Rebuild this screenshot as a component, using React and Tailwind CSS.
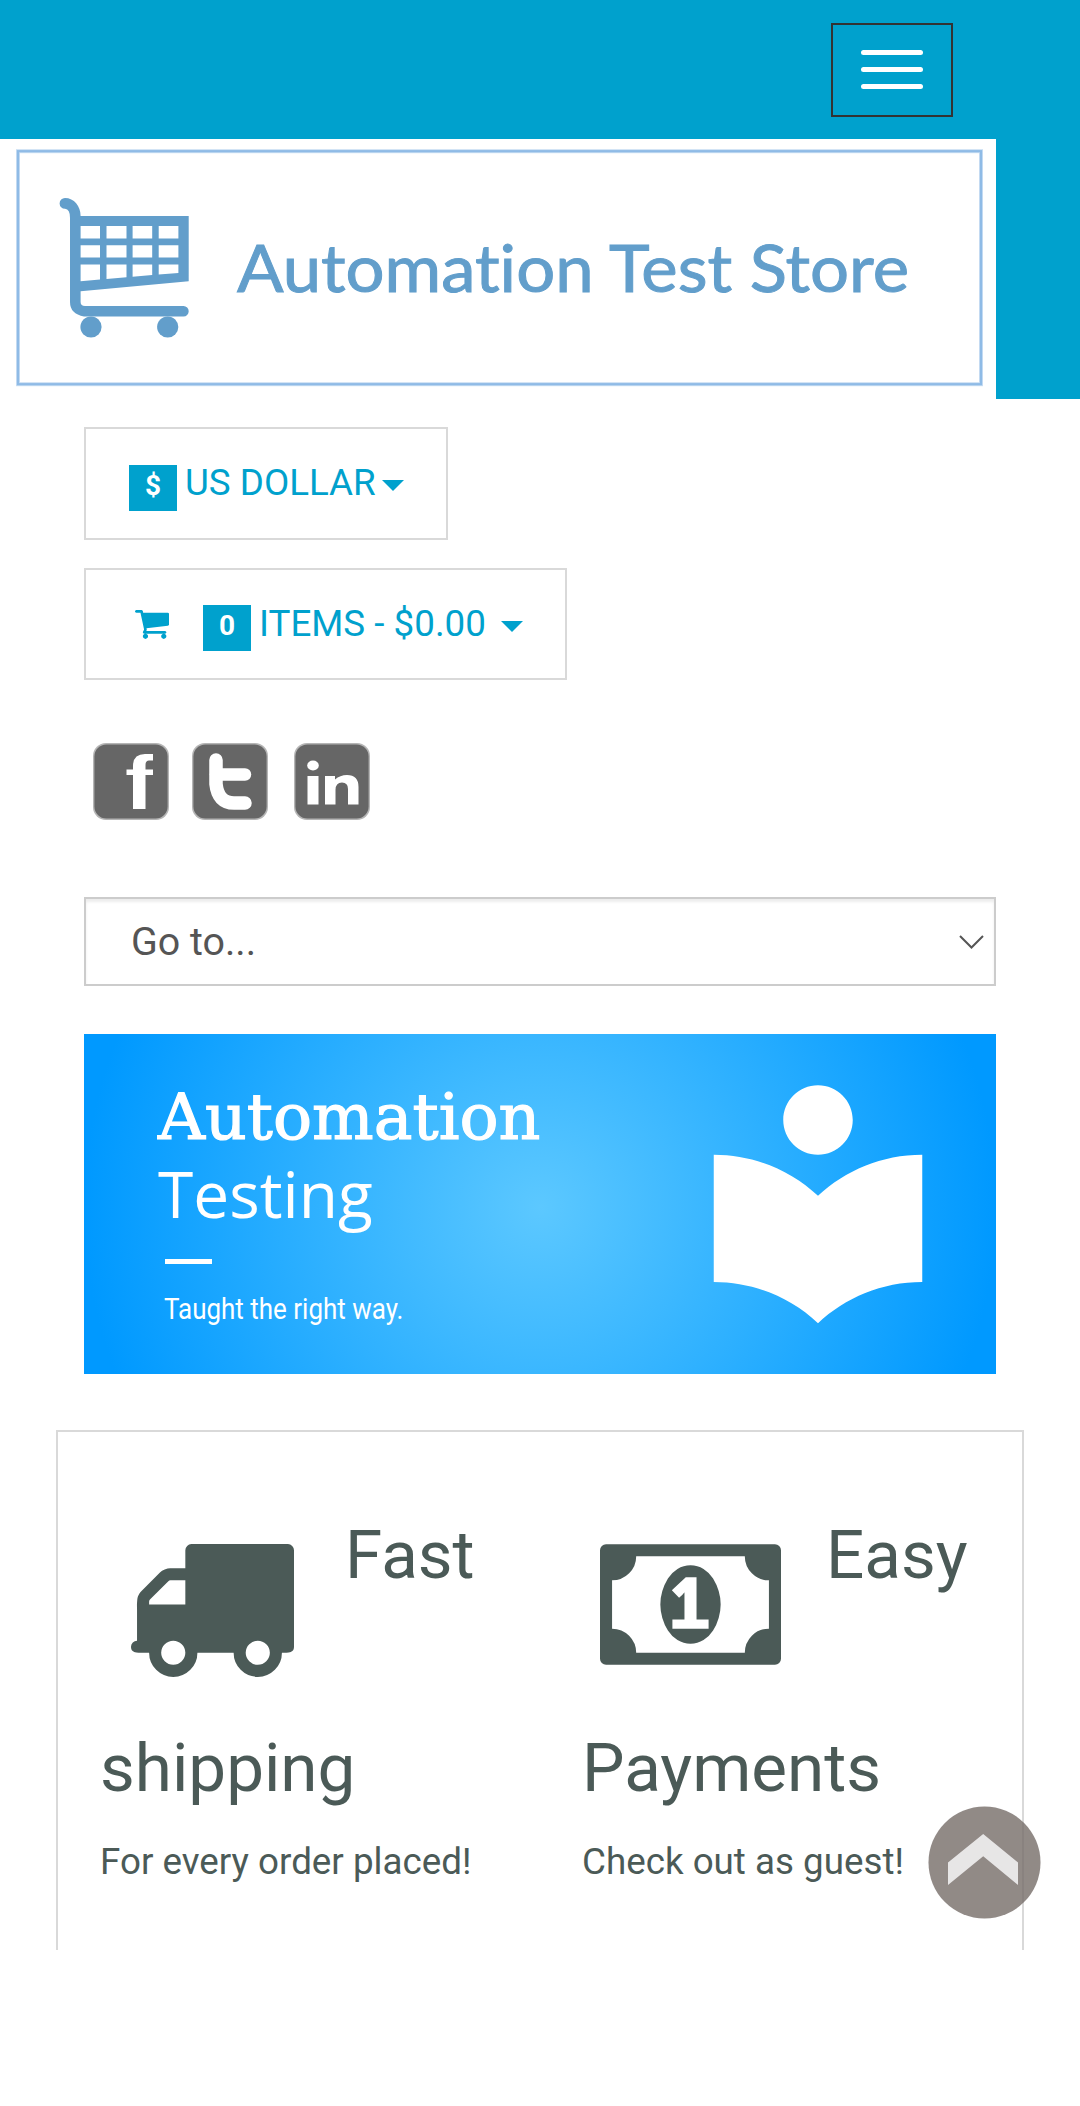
import React from "react";
import { MdLocalLibrary } from "react-icons/md";

const CartGlyph = () => (
  <svg className="h-[29px] w-[34px] fill-current" viewBox="64 256 1664 1408">
    <path d="M704 1536q0 52-38 90t-90 38-90-38-38-90 38-90 90-38 90 38 38 90zm896 0q0 52-38 90t-90 38-90-38-38-90 38-90 90-38 90 38 38 90zm128-1088v512q0 24-16.500 42.500t-40.500 21.500l-1044 122q13 60 13 70 0 16-24 64h920q26 0 45 19t19 45-19 45-45 19h-1024q-26 0-45-19t-19-45q0-11 8-31.500t16-36 21.500-40 15.500-29.500l-177-823h-204q-26 0-45-19t-19-45 19-45 45-19h256q16 0 28.500 6.500t19.500 15.500 13 24.500 8 26 5.500 29.500 4.500 26h1201q26 0 45 19t19 45z" />
  </svg>
);

const Truck = () => (
  <svg className="h-[133px] w-[163px] shrink-0 fill-current" viewBox="64 256 1728 1408">
    <path d="M640 1408q0-52-38-90t-90-38-90 38-38 90 38 90 90 38 90-38 38-90zm-384-512h384v-256h-158q-13 0-22 9l-195 195q-9 9-9 22v30zm1280 512q0-52-38-90t-90-38-90 38-38 90 38 90 90 38 90-38 38-90zm256-1088v1024q0 15-4 26.500t-13.500 18.500-16.500 11.500-23.500 6-22.500 2-25.500 0-22.500-.5q0 106-75 181t-181 75-181-75-75-181h-384q0 106-75 181t-181 75-181-75-75-181h-64q-3 0-22.500.5t-25.500 0-22.500-2-23.500-6-16.500-11.500-13.500-18.500-4-26.500q0-26 19-45t45-19v-320q0-8-.5-35t0-38 2.500-34.500 6.500-37 14-30.500 22.500-30l198-198q19-19 50.500-32t58.500-13h160v-192q0-26 19-45t45-19h1024q26 0 45 19t19 45z" />
  </svg>
);

const Money = () => (
  <svg className="h-[121px] w-[181px] shrink-0 fill-current" viewBox="0 256 1920 1280">
    <path d="M768 1152h384v-96h-128v-448h-114l-148 137 77 80q42-37 55-57h2v288h-128v96zm512-256q0 70-21 142t-59.500 134-101.500 101-138 39-138-39-101.500-101-59.500-134-21-142 21-142 59.500-134 101.500-101 138-39 138 39 101.500 101 59.500 134 21 142zm512 256v-512q-106 0-181-75t-75-181h-1152q0 106-75 181t-181 75v512q106 0 181 75t75 181h1152q0-106 75-181t181-75zm128-832v1152q0 26-19 45t-45 19h-1792q-26 0-45-19t-19-45v-1152q0-26 19-45t45-19h1792q26 0 45 19t19 45z" />
  </svg>
);

const Logo = () => (
  <svg className="block h-[260px] w-[996px] bg-white" viewBox="0 139 996 260">
    <rect x="18" y="151.200" width="963" height="233" fill="none" stroke="#c9def3" strokeWidth="4" />
    <rect x="18" y="151.200" width="963" height="233" fill="none" stroke="#8fbbe6" strokeWidth="2.200" />
    <g fill="#629ecb">
      <path
        fillRule="evenodd"
        d="M65 198 C74 198 80.600 206 80.600 216 H188.700 V281.300 L80.600 291.300 V302 Q80.600 306 85 306 H183.500 A5.200 5.200 0 0 1 183.500 316.400 H84 Q70 314 70 302 V218 Q70 209 65 208.800 A5.400 5.400 0 0 1 65 198 Z
           M80.600 226 V238.500 H100 V226 Z M106.500 226 V238.500 H126.500 V226 Z M132.600 226 V238.500 H152.200 V226 Z M158.700 226 V238.500 H178.400 V226 Z
           M80.600 245.200 V257.500 H100 V245.200 Z M106.500 245.200 V257.500 H126.500 V245.200 Z M132.600 245.200 V257.500 H152.200 V245.200 Z M158.700 245.200 V257.500 H178.400 V245.200 Z
           M80.600 264.400 V281.300 L100 279.600 V264.400 Z M106.500 264.400 V279 L126.500 277.300 V264.400 Z M132.600 264.400 V276.800 L152.200 275.100 V264.400 Z M158.700 264.400 V274.600 L178.400 272.900 V264.400 Z"
      />
      <circle cx="91" cy="327" r="10.600" />
      <circle cx="167.700" cy="327" r="10.600" />
    </g>
    <text
      className="[font-variant-ligatures:none]"
      x="237"
      y="292"
      fontFamily="Lato, sans-serif"
      fontSize="66"
      fill="#629ecb"
      stroke="#629ecb"
      strokeWidth="1"
      textLength="672"
      lengthAdjust="spacingAndGlyphs"
    >
      Automation Test Store
    </text>
  </svg>
);

const Caret = ({ className }) => (
  <span className={`h-0 w-0 border-x-[11px] border-t-[11px] border-x-transparent border-t-[#00a1cd] ${className}`} />
);

const Badge = ({ children, className }) => (
  <span className={`h-[46px] w-[48px] bg-[#00a1cd] text-center text-[28px] leading-[41px] font-bold text-white ${className}`}>{children}</span>
);

const Tile = ({ className, children }) => (
  <svg className={`h-[77px] w-[76px] ${className}`} viewBox="0 0 76 77">
    <rect x="0" y="0" width="76" height="77" rx="13" fill="#b5b5b5" />
    <rect x="1.400" y="1.400" width="73.200" height="74" rx="12" fill="#666" />
    {children}
  </svg>
);

const Feature = ({ icon, first, second, text, iconPad, gap, className }) => (
  <div className={`text-[#4b5a57] ${className}`}>
    <div className={`flex h-[213px] items-start text-[67.4px] leading-[80px] ${iconPad} ${gap}`}>
      <span className="pt-[29px]">{icon}</span>
      <span>{first}</span>
    </div>
    <h2 className="text-[67.4px] leading-[80px]">{second}</h2>
    <p className="mt-[30px] text-[36.75px] leading-[48px] whitespace-nowrap">{text}</p>
  </div>
);

export default function App() {
  return (
    <div className="relative h-[2106px] w-[1080px] overflow-hidden bg-white font-['Roboto',sans-serif]">
      <header className="bg-[#00a1cd]">
        <div className="flex h-[139px] justify-end pt-[23px] pr-[127px]">
          <button className="flex h-[94px] w-[122px] flex-col items-center gap-[12px] border-2 border-[#333] pt-[25px]">
            <span className="h-[5px] w-[62px] rounded-[3px] bg-white" />
            <span className="h-[5px] w-[62px] rounded-[3px] bg-white" />
            <span className="h-[5px] w-[62px] rounded-[3px] bg-white" />
          </button>
        </div>
        <Logo />
      </header>

      <div className="px-[84px] pt-[28px]">
        <div className="flex h-[113px] w-[364px] items-start border-2 border-[#d9d9d9] pl-[43px] text-[#00a1cd]">
          <Badge className="mt-[36px]">$</Badge>
          <span className="ml-[8px] pt-[29px] text-[36.75px] leading-[50px] whitespace-nowrap">US DOLLAR</span>
          <Caret className="mt-[51px] ml-[6px]" />
        </div>
        <div className="mt-[28px] flex h-[112px] w-[483px] items-start border-2 border-[#d9d9d9] pl-[49px] text-[#00a1cd]">
          <span className="pt-[40px]"><CartGlyph /></span>
          <Badge className="mt-[35px] ml-[34px]">0</Badge>
          <span className="ml-[8px] pt-[29px] text-[36.75px] leading-[50px] whitespace-nowrap">ITEMS - $0.00</span>
          <Caret className="mt-[51px] ml-[15px]" />
        </div>

        <div className="mt-[63px] flex pl-[8.500px]">
          <Tile>
            <path d="M40 66 V32 H33.500 V26.500 H40 V23 Q40 11 52 11 H60 V17.500 H56 Q52.500 17.500 52.500 22 V26.500 H60 V32 H52.500 V66 Z" fill="#fff" />
          </Tile>
          <Tile className="ml-[23px]">
            <path d="M24 17 V41 Q26 60 42 60 H53" fill="none" stroke="#fff" strokeWidth="13.500" strokeLinecap="round" />
            <path d="M24 31.500 H53" fill="none" stroke="#fff" strokeWidth="12.500" strokeLinecap="round" />
          </Tile>
          <Tile className="ml-[26px]">
            <ellipse cx="19" cy="22.500" rx="5.800" ry="5" fill="#fff" />
            <path d="M13.500 33 H24.500 V61.500 H13.500 Z M31 33 H41 V36.500 Q46 32 53 32 Q64.500 32 64.500 44 V61.500 H54 V46 Q54 39.500 48 39.500 Q41.500 39.500 41.500 47 V61.500 H31 Z" fill="#fff" />
          </Tile>
        </div>

        <div className="mt-[77px] flex h-[89px] items-center justify-between border-2 border-[#ccc] pr-[10px] pl-[45px] text-[39.375px] text-[#555] shadow-[inset_0_3px_3px_rgba(0,0,0,0.075)]">
          <span>Go to...</span>
          <svg className="h-[14px] w-[25px]" viewBox="0 0 25 14" fill="none" stroke="#555" strokeWidth="2">
            <path d="M1 1 L12.500 12.500 L24 1" />
          </svg>
        </div>

        <section className="mt-[48px] flex h-[340px] justify-between bg-[radial-gradient(circle_456px_at_50%_51%,#5cc8ff,#0099ff)] pr-[39px] pl-[74px] text-white">
          <div className="flex flex-col whitespace-nowrap">
            <span className="mt-[43px] w-[382px] origin-left scale-x-[1.016] font-['DejaVu_Serif',serif] text-[64px] leading-[80px] [-webkit-text-stroke:1.2px_white]">Automation</span>
            <span className="-mt-[3px] font-['Open_Sans',sans-serif] text-[64px] leading-[80px]">Testing</span>
            <span className="mt-[25px] ml-[7px] h-[5px] w-[47px] bg-white" />
            <span className="mt-[23px] ml-[6px] origin-left scale-x-[0.880] text-[29.500px] leading-[44px]">Taught the right way.</span>
          </div>
          <MdLocalLibrary className="mt-[28px] h-[278px] w-[278px] shrink-0" />
        </section>
      </div>

      <section className="mt-[56px] ml-[56px] flex h-[520px] w-[968px] border-2 border-b-0 border-[#d9d9d9] pt-[83px]">
        <Feature className="ml-[42px] w-[482px]" iconPad="pl-[31px]" gap="gap-[51px]" icon={<Truck />} first="Fast" second="shipping" text="For every order placed!" />
        <Feature iconPad="pl-[18px]" gap="gap-[45px]" icon={<Money />} first="Easy" second="Payments" text="Check out as guest!" />
      </section>

      <button className="absolute top-[1806px] left-[928px]" aria-label="Back to top">
        <svg className="h-[113px] w-[113px]" viewBox="0 0 113 113">
          <g opacity="0.800">
            <circle cx="56.500" cy="56.500" r="56" fill="#766d69" />
            <path d="M55.200 28 L90 56.500 V79 L55.200 50.200 L20 79 V56.500 Z" fill="#e2e0e0" />
          </g>
        </svg>
      </button>
    </div>
  );
}
